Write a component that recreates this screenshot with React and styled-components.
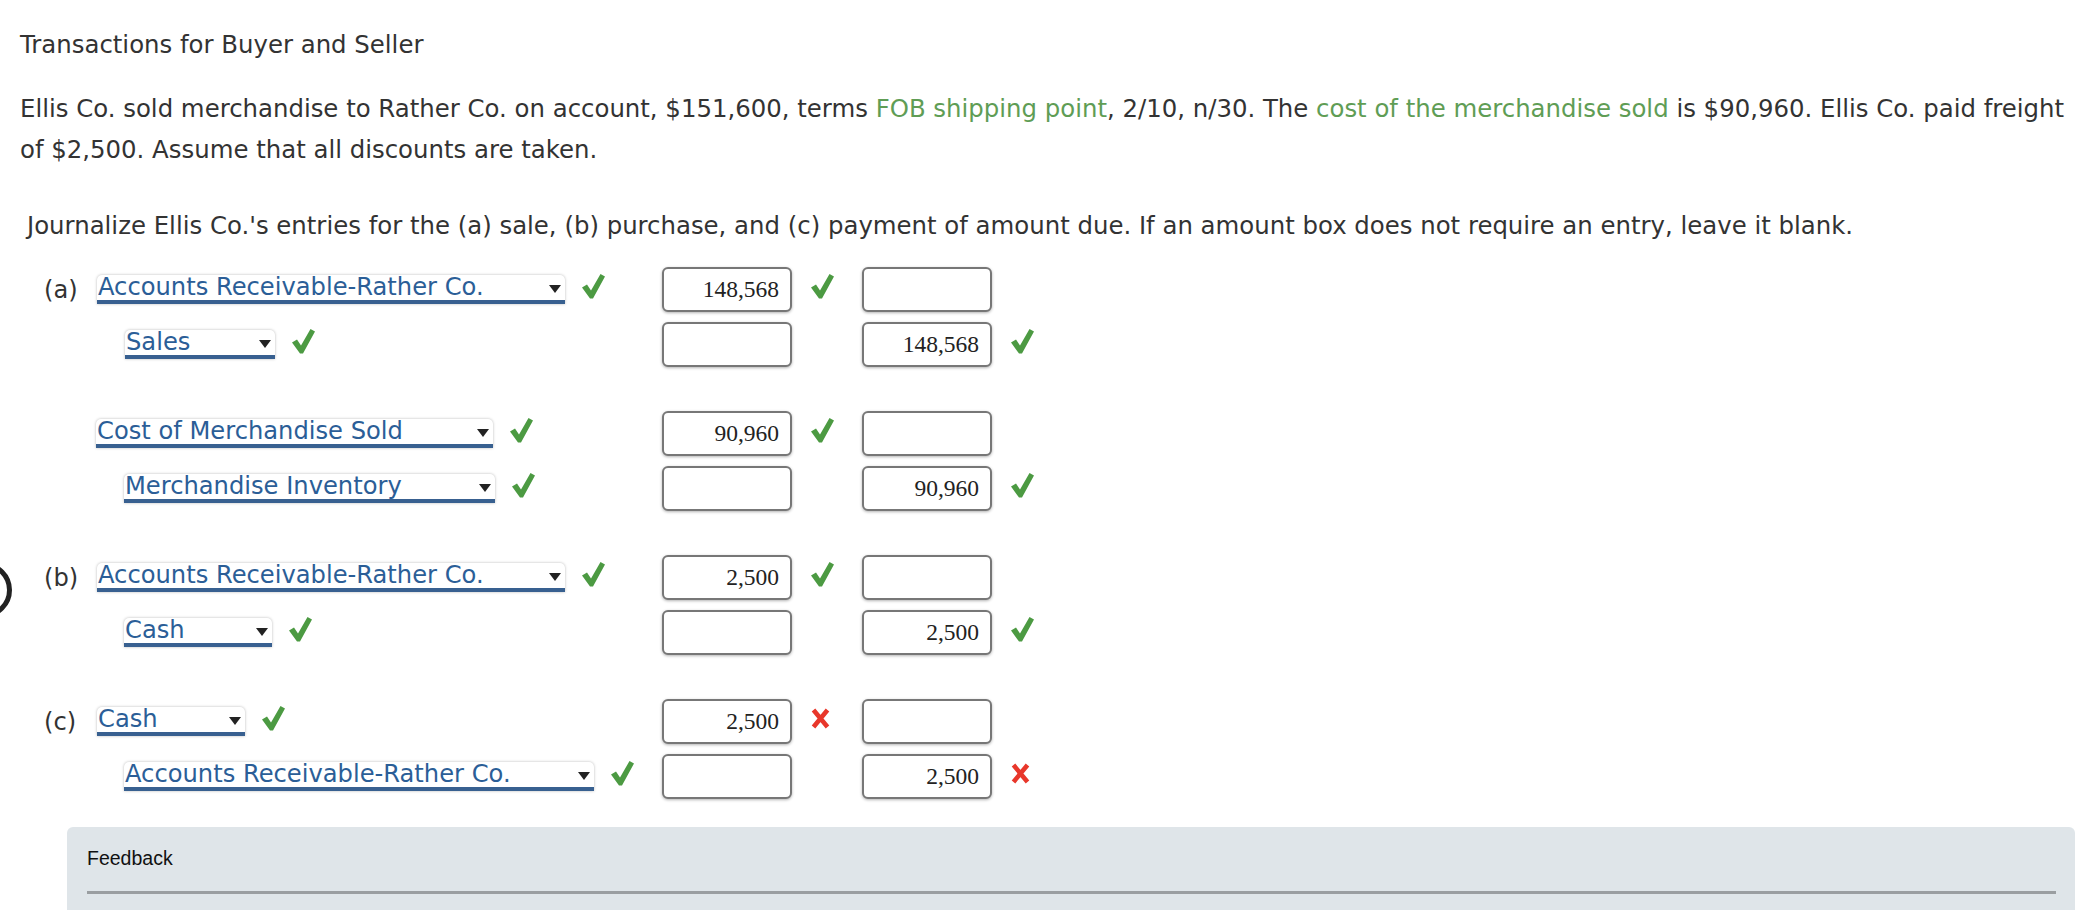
import React from 'react';
import styled, { createGlobalStyle } from 'styled-components';

const GlobalStyle = createGlobalStyle`
  html, body {
    margin: 0;
    background: #ffffff;
  }
  body {
    font-family: 'DejaVu Sans', Verdana, sans-serif;
    color: #333333;
  }
`;

const Page = styled.div`
  position: relative;
  padding: 30px 13px 0 20px;
  min-height: 880px;
  overflow: hidden;
`;

// the dark arc cut by the left window edge
const EdgeArc = styled.div`
  position: absolute;
  left: -44px;
  top: 562px;
  width: 46px;
  height: 46px;
  border: 5px solid #222;
  border-radius: 50%;
`;

const Title = styled.div`
  font-size: 24.4px;
  line-height: 30px;
`;

const Para = styled.p`
  margin: 28px 0 0;
  font-size: 24.4px;
  line-height: 41px;
`;

const Hl = styled.span`
  color: #5f9d55;
`;

const Instruction = styled.p`
  margin: 41px 0 0 7px;
  font-size: 24.4px;
  line-height: 30px;
`;

const Journal = styled.div`
  margin: 26px 0 0 24px;
`;

const Group = styled.div`
  display: flex;
  flex-direction: column;
  gap: 10px;
  & + & {
    margin-top: 44px;
  }
`;

const Line = styled.div`
  display: grid;
  grid-template-columns: 618px 130px 70px 130px 60px;
  height: 45px;
  align-items: center;
`;

const AccountCell = styled.div`
  display: flex;
  align-items: center;
  padding-left: ${(p) => p.$indent}px;
`;

const Label = styled.span`
  width: 53px;
  font-size: 24.2px;
  color: #333;
`;

const Select = styled.div`
  display: flex;
  align-items: center;
  justify-content: space-between;
  box-sizing: border-box;
  width: ${(p) => p.$w}px;
  height: 29px;
  padding: 0 4px 0 1px;
  background: #fff;
  border-radius: 5px 5px 0 0;
  border-bottom: 4px solid #386090;
  box-shadow: 0 0 3px rgba(0, 0, 0, 0.28);
  color: #2b5e97;
  font-size: 24.2px;
  line-height: 25px;
  white-space: nowrap;
`;

const Arrow = styled.span`
  width: 0;
  height: 0;
  border-left: 6px solid transparent;
  border-right: 6px solid transparent;
  border-top: 8px solid #222;
  margin-top: 2px;
`;

const MarkSlot = styled.span`
  display: inline-flex;
  margin-left: ${(p) => p.$gap || 17}px;
  margin-top: -6px;
`;

const Amount = styled.div`
  box-sizing: border-box;
  width: 130px;
  height: 45px;
  border: 2px solid #777;
  border-radius: 6px;
  box-shadow: 0 1px 3px rgba(0, 0, 0, 0.3);
  background: #fff;
  padding-right: 11px;
  text-align: right;
  font-family: 'Liberation Serif', 'Times New Roman', serif;
  font-size: 23.5px;
  line-height: 40px;
  color: #222;
`;

const MarkCell = styled.div`
  display: flex;
  align-items: center;
  padding-left: 19px;
  margin-top: -6px;
`;

const Feedback = styled.div`
  margin-top: 28px;
  margin-left: 47px;
  padding: 20px 19px 40px 20px;
  background: #dfe5e9;
  border-radius: 6px 6px 0 0;
`;

const FeedbackTitle = styled.div`
  font-family: 'Liberation Sans', Arial, sans-serif;
  font-size: 19.5px;
  line-height: 22px;
  color: #111;
`;

const Rule = styled.div`
  margin-top: 22px;
  height: 3px;
  background: #9a9ea1;
`;

const Check = () => (
  <svg width="23" height="25" viewBox="0 0 23 25">
    <path d="M0 13.5 L5 10.5 L9 16.5 L18.5 0 L23 2.5 L11 24.5 L8 24.5 Z" fill="#4c9a42" />
  </svg>
);

const Cross = () => (
  <svg width="19" height="21" viewBox="0 0 19 21">
    <path d="M2.5 2 L16.5 19 M16.5 2 L2.5 19" stroke="#e8372b" strokeWidth="4.6" strokeLinecap="butt" />
  </svg>
);

const Mark = ({ kind }) => (kind === 'x' ? <Cross /> : kind === 'ok' ? <Check /> : null);

const groups = [
  [
    { label: '(a)', account: 'Accounts Receivable-Rather Co.', w: 468, dr: '148,568', drMark: 'ok' },
    { indent: 81, account: 'Sales', w: 150, cr: '148,568', crMark: 'ok' },
  ],
  [
    { indent: 52, account: 'Cost of Merchandise Sold', w: 397, dr: '90,960', drMark: 'ok' },
    { indent: 80, account: 'Merchandise Inventory', w: 371, cr: '90,960', crMark: 'ok' },
  ],
  [
    { label: '(b)', account: 'Accounts Receivable-Rather Co.', w: 468, dr: '2,500', drMark: 'ok' },
    { indent: 80, account: 'Cash', w: 148, cr: '2,500', crMark: 'ok' },
  ],
  [
    { label: '(c)', account: 'Cash', w: 148, dr: '2,500', drMark: 'x' },
    { indent: 80, account: 'Accounts Receivable-Rather Co.', w: 470, cr: '2,500', crMark: 'x' },
  ],
];

const EntryLine = ({ row }) => (
  <Line>
    <AccountCell $indent={row.label ? 0 : row.indent}>
      {row.label && <Label>{row.label}</Label>}
      <Select $w={row.w}>
        <span>{row.account}</span>
        <Arrow />
      </Select>
      <MarkSlot>
        <Check />
      </MarkSlot>
    </AccountCell>
    <Amount>{row.dr || ''}</Amount>
    <MarkCell>
      <Mark kind={row.drMark} />
    </MarkCell>
    <Amount>{row.cr || ''}</Amount>
    <MarkCell>
      <Mark kind={row.crMark} />
    </MarkCell>
  </Line>
);

const App = () => (
  <>
    <GlobalStyle />
    <Page>
      <EdgeArc />
      <Title>Transactions for Buyer and Seller</Title>
      <Para>
        Ellis Co. sold merchandise to Rather Co. on account, $151,600, terms <Hl>FOB shipping point</Hl>, 2/10,
        n/30. The <Hl>cost of the merchandise sold</Hl> is $90,960. Ellis Co. paid freight of $2,500. Assume that
        all discounts are taken.
      </Para>
      <Instruction>
        Journalize Ellis Co.'s entries for the (a) sale, (b) purchase, and (c) payment of amount due. If an amount
        box does not require an entry, leave it blank.
      </Instruction>
      <Journal>
        {groups.map((g, i) => (
          <Group key={i}>
            {g.map((row, j) => (
              <EntryLine key={j} row={row} />
            ))}
          </Group>
        ))}
      </Journal>
      <Feedback>
        <FeedbackTitle>Feedback</FeedbackTitle>
        <Rule />
      </Feedback>
    </Page>
  </>
);

export default App;
